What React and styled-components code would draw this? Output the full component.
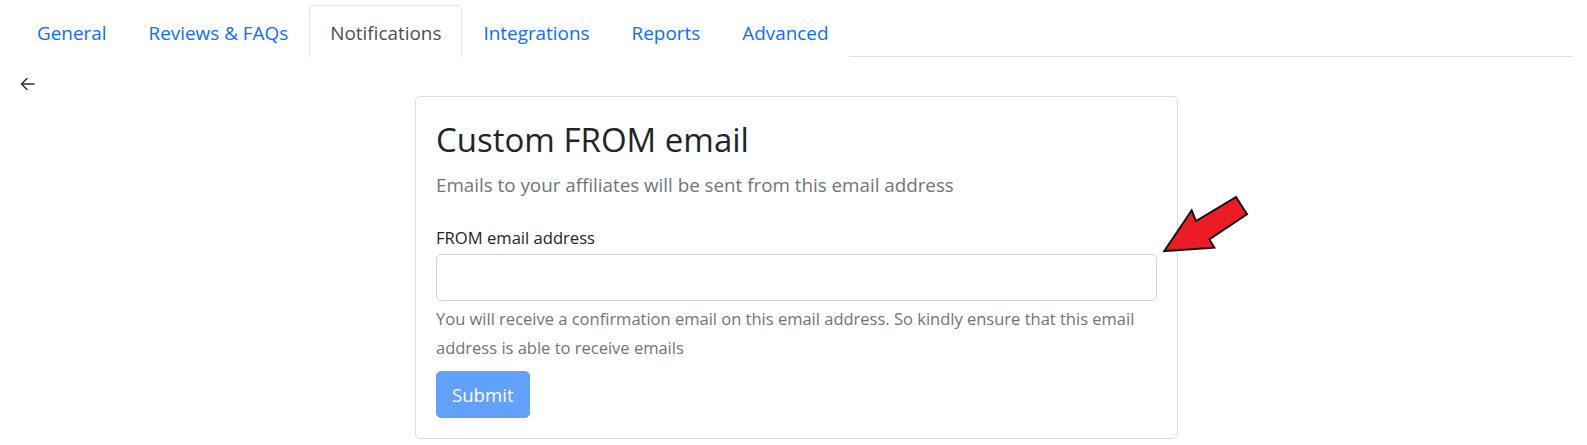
import React from 'react';
import styled, { createGlobalStyle } from 'styled-components';

const GlobalStyle = createGlobalStyle`
  html, body { margin: 0; padding: 0; background: #fff; }
  body {
    font-family: "Open Sans", "Noto Sans", sans-serif;
    color: #212529;
  }
  * { box-sizing: border-box; }
`;

const tabs = ['General', 'Reviews & FAQs', 'Notifications', 'Integrations', 'Reports', 'Advanced'];

const App = () => {
  return (
    <Page>
      <GlobalStyle />
      <TabBar>
        {tabs.map((t) => (
          <Tab key={t} active={t === 'Notifications'}>{t}</Tab>
        ))}
      </TabBar>
      <BackRow>
        <BackButton aria-label="Back">
          <svg width="15" height="14" viewBox="0 0 15 14" fill="none" stroke="#333" strokeWidth="1.6" strokeLinecap="round" strokeLinejoin="round">
            <path d="M14 7H1.5M7 1.5L1.5 7L7 12.5" />
          </svg>
        </BackButton>
      </BackRow>
      <CardRow>
        <Card>
          <Title>Custom FROM email</Title>
          <Lead>Emails to your affiliates will be sent from this email address</Lead>
          <Label htmlFor="from-email">FROM email address</Label>
          <Input id="from-email" type="email" />
          <Help>
            You will receive a confirmation email on this email address. So kindly ensure that this email
            address is able to receive emails
          </Help>
          <Submit disabled>Submit</Submit>
          <Pointer width="92" height="62" viewBox="0 0 92 62">
            <polygon
              points="3.3,57 30.7,16.3 35,27 75,3 86,20.3 48.3,45.3 53.3,53.7"
              fill="#ed1c24"
              stroke="#111"
              strokeWidth="2"
              strokeLinejoin="miter"
            />
          </Pointer>
        </Card>
      </CardRow>
    </Page>
  );
};

export default App;

const Page = styled.div`
  padding: 5px 15px 0 16px;
`;

const TabBar = styled.ul`
  display: flex;
  list-style: none;
  margin: 0;
  padding: 0;
  border-bottom: 1px solid #dee2e6;
`;

const Tab = styled.li`
  padding: 12px 20px 8px;
  margin-bottom: -1px;
  font-size: 18.9px;
  line-height: 30px;
  color: ${(p) => (p.active ? '#495057' : '#0d6efd')};
  background: #fff;
  border: 1px solid ${(p) => (p.active ? '#dee2e6' : 'transparent')};
  border-bottom-color: ${(p) => (p.active ? '#fff' : 'transparent')};
  border-radius: 5px 5px 0 0;
  cursor: pointer;
`;

const BackRow = styled.div`
  display: flex;
  padding-top: 20px;
  height: 39px;
`;

const BackButton = styled.button`
  display: flex;
  align-items: center;
  border: 0;
  background: none;
  padding: 0 0 0 4px;
  height: 14px;
  cursor: pointer;
`;

const CardRow = styled.div`
  display: flex;
  justify-content: center;
  padding-left: 5px;
`;

const Card = styled.div`
  position: relative;
  width: 763px;
  border: 1px solid rgba(0, 0, 0, 0.13);
  border-radius: 5px;
  padding: 20px 20px 20px;
`;

const Title = styled.h2`
  margin: 3px 0 0;
  font-size: 33px;
  font-weight: 400;
  line-height: 1.2;
  color: #212529;
`;

const Lead = styled.p`
  margin: 10px 0 25px;
  font-size: 18.8px;
  line-height: 30px;
  color: #6c757d;
`;

const Label = styled.label`
  display: block;
  font-size: 16.6px;
  line-height: 25px;
  margin-bottom: 4px;
  color: #212529;
`;

const Input = styled.input`
  display: block;
  width: 100%;
  height: 47px;
  border: 1px solid #ced4da;
  border-radius: 5px;
  padding: 8px 15px;
  font-size: 18px;
  font-family: inherit;
`;

const Help = styled.div`
  margin-top: 3px;
  font-size: 16.5px;
  line-height: 29px;
  color: #6c757d;
`;

const Submit = styled.button`
  margin-top: 9px;
  height: 47px;
  padding: 0 15px;
  font-family: inherit;
  font-size: 18.6px;
  color: #fff;
  background: #61a0fd;
  border: 1px solid #61a0fd;
  border-radius: 5px;
`;

const Pointer = styled.svg`
  position: absolute;
  left: 745px;
  top: 97px;
  overflow: visible;
`;
